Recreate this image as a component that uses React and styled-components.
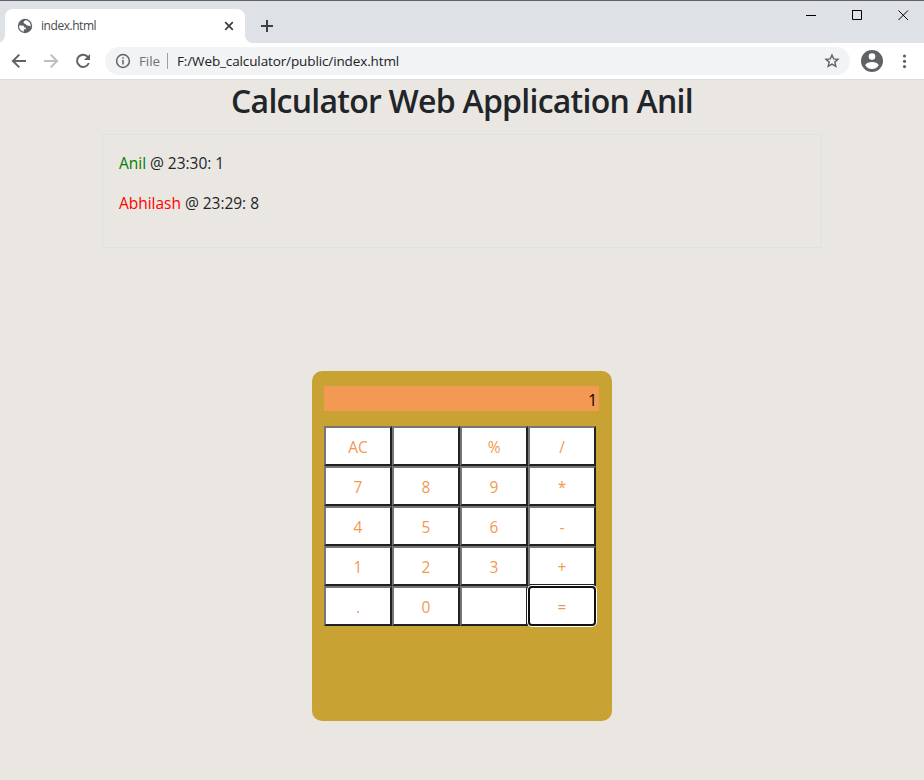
import React from "react";
import styled, { createGlobalStyle } from "styled-components";

const Global = createGlobalStyle`
  * { box-sizing: border-box; }
  body { margin: 0; background: #eae7e2; overflow: hidden; }
  p, h1 { margin: 0; }
`;

const Window = styled.div`
  width: 924px;
  height: 780px;
  display: flex;
  flex-direction: column;
  background: #eae7e2;
  font-family: "Open Sans", "Noto Sans", sans-serif;
  color: #212529;
  white-space: nowrap;
`;

const TabStrip = styled.div`
  height: 43px;
  flex: none;
  display: flex;
  align-items: flex-end;
  background: #dee1e6;
  border-top: 1px solid #616366;
  padding-left: 5px;
`;

const Tab = styled.div`
  position: relative;
  width: 240px;
  height: 34px;
  display: flex;
  align-items: center;
  padding: 0 10px 0 12px;
  background: #fff;
  border-radius: 8px 8px 0 0;

  &::before,
  &::after {
    content: "";
    position: absolute;
    bottom: 0;
    width: 8px;
    height: 8px;
  }
  &::before {
    left: -8px;
    background: radial-gradient(circle at 0 0, transparent 7.5px, #fff 8.5px);
  }
  &::after {
    right: -8px;
    background: radial-gradient(circle at 100% 0, transparent 7.5px, #fff 8.5px);
  }
`;

const TabTitle = styled.span`
  flex: 1;
  margin-left: 8px;
  font-size: 12px;
  line-height: 16px;
  letter-spacing: -0.45px;
  color: #45494d;
`;

const NewTab = styled.div`
  display: flex;
  margin: 0 0 9px 14px;
`;

const WindowControls = styled.div`
  flex: 1;
  align-self: flex-start;
  display: flex;
  justify-content: flex-end;
  gap: 35px;
  padding: 8px 15px 0 0;
`;

const Toolbar = styled.div`
  height: 37px;
  flex: none;
  display: flex;
  align-items: center;
  background: #fff;
  border-bottom: 1px solid #dadce0;
  padding-left: 11px;
`;

const NavButtons = styled.div`
  display: flex;
  gap: 16px;
  width: 94px;
`;

const AddressBar = styled.div`
  width: 745px;
  height: 28px;
  display: flex;
  align-items: center;
  padding: 0 10px;
  background: #f1f3f4;
  border-radius: 14px;
  font-size: 13.5px;
  line-height: 20px;
`;

const Scheme = styled.span`
  margin-left: 8px;
  width: 28px;
  letter-spacing: -0.1px;
  color: #6f7377;
`;

const Divider = styled.span`
  width: 1px;
  height: 16px;
  background: #9aa0a6;
`;

const Url = styled.span`
  flex: 1;
  margin-left: 9px;
  letter-spacing: -0.12px;
  color: #202124;
`;

const Actions = styled.div`
  display: flex;
  align-items: center;
  gap: 13px;
  padding-left: 10px;
`;

const Page = styled.main`
  flex: 1;
  display: flex;
  flex-direction: column;
  align-items: center;
`;

const Heading = styled.h1`
  font-size: 32px;
  font-weight: 600;
  line-height: 42px;
  letter-spacing: -0.75px;
`;

const History = styled.section`
  width: 720px;
  height: 114px;
  margin-top: 12px;
  padding: 16px;
  border: 1px solid #dee2e6;
  display: flex;
  flex-direction: column;
  gap: 16px;
  font-size: 15.5px;
  line-height: 24px;
`;

const Entry = styled.p`
  letter-spacing: -0.03px;
`;

const User = styled.span`
  color: ${(p) => p.$color};
`;

const Calculator = styled.section`
  width: 300px;
  height: 350px;
  margin-top: 123px;
  padding: 15px 12px;
  background: #c8a333;
  border-radius: 10px;
`;

const Display = styled.div`
  width: 275px;
  height: 25px;
  padding-right: 2px;
  background: #f29954;
  color: #000;
  font-size: 15.5px;
  line-height: 28px;
  text-align: right;
`;

const Keys = styled.div`
  display: grid;
  grid-template-columns: repeat(4, 68px);
  grid-auto-rows: 40px;
  margin-top: 15px;
`;

const Key = styled.button`
  padding: 2px 0 0;
  background: #fff;
  border: 2px solid;
  border-color: #767676 #212121 #212121 #767676;
  color: #f29954;
  font: 15.5px/24px "Open Sans", "Noto Sans", sans-serif;
  letter-spacing: -0.1px;

  ${(p) =>
    p.$focused &&
    `
    border-color: #101010;
    border-radius: 4px;
    box-shadow: 0 0 0 1px #fff;
    z-index: 1;
  `}
`;

const keys = [
  "AC", "", "%", "/",
  "7", "8", "9", "*",
  "4", "5", "6", "-",
  "1", "2", "3", "+",
  ".", "0", "", "=",
];

const Stroke = ({ size = 16, color = "#5f6368", width = 2, children }) => (
  <svg width={size} height={size} viewBox={`0 0 ${size} ${size}`} fill="none" stroke={color} strokeWidth={width}>
    {children}
  </svg>
);

const Globe = () => (
  <svg width="16" height="16" viewBox="0 0 16 16">
    <circle cx="8" cy="8" r="7.2" fill="#5f6368" />
    <path
      d="M2.1 7.6 H5.5 C6.6 7.6 7.2 8.3 7.2 9.4 H8.8 V11.2 H6.8 V13.7 C4 13.2 1.9 10.8 2.1 7.6Z M9 2.2 C7 2.6 6.4 3.8 6.7 5 C7.2 6 8.8 5.6 9.1 6.7 C9.5 7.9 11.6 7.2 12.8 8 L13.7 8.5 C13.9 5.4 12 2.7 9 2.2Z"
      fill="#fff"
    />
    <path d="M7.4 13.8 V12 H8.6 C9.6 12 9.8 11.2 9.8 10.3 H10.6 C11.8 10.3 12.3 9.2 13.8 9 C13.3 11.8 10.8 14 7.4 13.8Z" fill="#5f6368" />
  </svg>
);

export default function App() {
  return (
    <Window>
      <Global />
      <TabStrip>
        <Tab>
          <Globe />
          <TabTitle>index.html</TabTitle>
          <Stroke size={12} color="#3c4043" width={1.7}>
            <path d="M2.2 2.2 9.8 9.8M9.8 2.2 2.2 9.8" />
          </Stroke>
        </Tab>
        <NewTab>
          <Stroke color="#3c4043">
            <path d="M8 2V14M2 8H14" />
          </Stroke>
        </NewTab>
        <WindowControls>
          <Stroke size={11} color="#000" width={1}><path d="M1 6.5H11" /></Stroke>
          <Stroke size={11} color="#000" width={1}><path d="M1 1.5H10.5V10.5H1.5V1.5" /></Stroke>
          <Stroke size={12} color="#000" width={1}><path d="M1.5 1.5 11 11M11 1.5 1.5 11" /></Stroke>
        </WindowControls>
      </TabStrip>
      <Toolbar>
        <NavButtons>
          <Stroke><path d="M15 8H2M8.3 1.6 1.9 8 8.3 14.4" /></Stroke>
          <Stroke color="#bcbec1"><path d="M1 8H14M7.7 1.6 14.1 8 7.7 14.4" /></Stroke>
          <Stroke>
            <path d="M13.2 4.4A6.1 6.1 0 1 0 13.8 10" />
            <path d="M15 1V7H9Z" fill="#5f6368" stroke="none" />
          </Stroke>
        </NavButtons>
        <AddressBar>
          <Stroke width={1.5}>
            <circle cx="8" cy="8" r="6.4" />
            <path d="M8 7V11.5M8 4.3V5.8" />
          </Stroke>
          <Scheme>File</Scheme>
          <Divider />
          <Url>F:/Web_calculator/public/index.html</Url>
          <Stroke width={1.4}>
            <path d="M8 2 9.7 5.9 14 6.3 10.8 9.1 11.8 13.3 8 11.1 4.2 13.3 5.2 9.1 2 6.3 6.3 5.9Z" />
          </Stroke>
        </AddressBar>
        <Actions>
          <svg width="24" height="24" viewBox="0 0 24 24" fill="#5f6368">
            <path
              fillRule="evenodd"
              d="M12 1a11 11 0 1 0 0 22 11 11 0 0 0 0-22Zm0 3.3a3.3 3.3 0 1 1 0 6.6 3.3 3.3 0 0 1 0-6.6Zm0 15.6a7.9 7.9 0 0 1-6.6-3.5c0-2.2 4.4-3.4 6.6-3.4s6.6 1.2 6.6 3.4A7.9 7.9 0 0 1 12 19.9Z"
            />
          </svg>
          <svg width="16" height="16" viewBox="0 0 16 16" fill="#5f6368">
            <circle cx="7.5" cy="3" r="1.6" />
            <circle cx="7.5" cy="8.3" r="1.6" />
            <circle cx="7.5" cy="13.6" r="1.6" />
          </svg>
        </Actions>
      </Toolbar>
      <Page>
        <Heading>Calculator Web Application Anil</Heading>
        <History>
          <Entry><User $color="green">Anil</User> @ 23:30: 1</Entry>
          <Entry><User $color="red">Abhilash</User> @ 23:29: 8</Entry>
        </History>
        <Calculator>
          <Display>1</Display>
          <Keys>
            {keys.map((label, i) => (
              <Key key={i} $focused={label === "="}>{label}</Key>
            ))}
          </Keys>
        </Calculator>
      </Page>
    </Window>
  );
}
